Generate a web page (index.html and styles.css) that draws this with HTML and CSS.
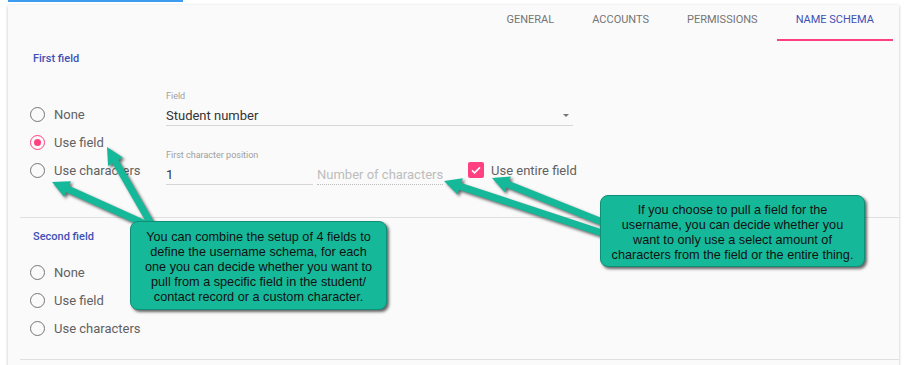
FILE: index.html
```html
<!DOCTYPE html>
<html lang="en">
<head>
  <meta charset="UTF-8" />
  <title>Name Schema</title>
  <link rel="stylesheet" href="styles.css">
</head>
<body>
  <div class="page">
    <div class="topline"></div>

    <div class="card">
      <nav class="tabs">
        <span class="tab">General</span>
        <span class="tab">Accounts</span>
        <span class="tab">Permissions</span>
        <span class="tab active">Name schema</span>
      </nav>

      <section class="block">
        <h2 class="block-title">First field</h2>
        <div class="block-body">
          <div class="radios">
            <label class="radio"><span class="dot"></span>None</label>
            <label class="radio checked"><span class="dot"></span>Use field</label>
            <label class="radio"><span class="dot"></span>Use characters</label>
          </div>
          <div class="fields">
            <div class="input select">
              <span class="input-label">Field</span>
              <span class="input-value">Student number</span>
              <span class="caret"></span>
            </div>
            <div class="field-row">
              <div class="input short">
                <span class="input-label">First character position</span>
                <span class="input-value">1</span>
              </div>
              <div class="input count">
                <span class="input-value placeholder">Number of characters</span>
              </div>
              <label class="check">
                <span class="box">
                  <svg width="12" height="12" viewBox="0 0 12 12"><path d="M2 6.3l2.6 2.5L10 3.4" fill="none" stroke="#fff" stroke-width="1.6"/></svg>
                </span>
                Use entire field
              </label>
            </div>
          </div>
        </div>
      </section>

      <div class="divider"></div>

      <section class="block second">
        <h2 class="block-title">Second field</h2>
        <div class="radios">
          <label class="radio"><span class="dot"></span>None</label>
          <label class="radio"><span class="dot"></span>Use field</label>
          <label class="radio"><span class="dot"></span>Use characters</label>
        </div>
      </section>

      <div class="divider"></div>
    </div>

    <!-- annotation arrows -->
    <svg class="arrows" width="922" height="365" viewBox="0 0 922 365">
      <g fill="#16b89a">
        <polygon transform="translate(107 147) rotate(60.2)" points="0,0 17,-8.5 17,-3.5 88,-3.5 88,3.5 17,3.5 17,8.5" />
        <polygon transform="translate(52 182) rotate(24.3)" points="0,0 17,-8.5 17,-3.5 104,-3.5 104,3.5 17,3.5 17,8.5" />
        <polygon transform="translate(444 181) rotate(18.2)" points="0,0 17,-8.5 17,-3.5 168,-3.5 168,3.5 17,3.5 17,8.5" />
        <polygon transform="translate(492 178) rotate(21.8)" points="0,0 17,-8.5 17,-3.5 120,-3.5 120,3.5 17,3.5 17,8.5" />
      </g>
    </svg>

    <div class="callout left">
      You can combine the setup of 4 fields to<br>
      define the username schema, for each<br>
      one you can decide whether you want to<br>
      pull from a specific field in the student/<br>
      contact record or a custom character.
    </div>
    <div class="callout right">
      If you choose to pull a field for the<br>
      username, you can decide whether you<br>
      want to only use a select amount of<br>
      characters from the field or the entire thing.
    </div>
  </div>
</body>
</html>
```

FILE: styles.css
```css
* {
  box-sizing: border-box;
}
body {
  margin: 0;
  background: #fff;
  font-family: Roboto, 'Liberation Sans', sans-serif;
  color: #616161;
  overflow: hidden;
}
.page {
  position: relative;
  width: 922px;
  height: 365px;
}
.topline {
  width: 175px;
  height: 2px;
  margin-left: 8px;
  background: #3d9cf0;
}

/* Card */
.card {
  margin: 3px 0 0 8px;
  width: 891px;
  height: 400px;
  background: #fafafa;
  box-shadow: 0 1px 3px rgba(0,0,0,0.25);
}

/* Tabs */
.tabs {
  display: flex;
  justify-content: flex-end;
  padding-right: 6px;
  height: 36px;
}
.tab {
  padding: 8px 19px 0;
  height: 36px;
  font-size: 11px;
  line-height: 14px;
  font-weight: 400;
  text-transform: uppercase;
  color: #757575;
  border-bottom: 2px solid transparent;
}
.tab.active {
  color: #3f51b5;
  border-bottom-color: #ff4081;
}

/* Blocks */
.block {
  padding: 11px 0 32px 25px;
}
.block.second {
  padding: 12px 0 17px 25px;
}
.block-title {
  margin: 0;
  font-size: 11px;
  line-height: 14px;
  font-weight: 500;
  color: #3f51b5;
}
.block-body {
  display: flex;
  margin-top: 24px;
}
.divider {
  height: 1px;
  margin-left: 12px;
  background: #e0e0e0;
}

/* Radios */
.radios {
  width: 136px;
  padding-top: 10px;
  margin-left: -3px;
}
.second .radios {
  margin-top: 14px;
  padding-top: 0;
}
.radio {
  display: flex;
  align-items: center;
  gap: 9px;
  height: 28px;
  font-size: 13px;
}
.dot {
  width: 15px;
  height: 15px;
  border: 1.7px solid #757575;
  border-radius: 50%;
  display: flex;
  align-items: center;
  justify-content: center;
}
.radio.checked .dot {
  border-color: #ff4081;
}
.radio.checked .dot::after {
  content: '';
  width: 7px;
  height: 7px;
  border-radius: 50%;
  background: #ff4081;
}

/* Inputs */
.fields {
  display: flex;
  flex-direction: column;
  gap: 23px;
}
.input {
  position: relative;
  display: flex;
  flex-direction: column;
  border-bottom: 1px solid #d6d6d6;
}
.input-label {
  font-size: 9px;
  line-height: 12px;
  color: #9e9e9e;
  margin-bottom: 5px;
}
.input-value {
  font-size: 13px;
  line-height: 18px;
  color: #333;
  white-space: nowrap;
}
.input-value.placeholder {
  color: #bdbdbd;
}
.select {
  width: 407px;
}
.caret {
  position: absolute;
  right: 4px;
  top: 24px;
  border-left: 3.5px solid transparent;
  border-right: 3.5px solid transparent;
  border-top: 3.5px solid #757575;
}
.field-row {
  display: flex;
  align-items: flex-end;
}
.short {
  width: 147px;
}
.count {
  width: 126px;
  margin-left: 4px;
  border-bottom: 1px dotted #bdbdbd;
}
.check {
  display: flex;
  align-items: center;
  gap: 7px;
  margin: 0 0 7px 25px;
  font-size: 13px;
}
.box {
  width: 16px;
  height: 16px;
  border-radius: 2px;
  background: #ff4081;
  display: flex;
  align-items: center;
  justify-content: center;
}

/* Annotations */
.arrows {
  position: absolute;
  left: 0;
  top: 0;
  filter: drop-shadow(2px 2px 1.5px rgba(0,0,0,0.6));
}
.callout {
  position: absolute;
  background: #16b89a;
  border: 1px solid #0f8f77;
  border-radius: 8px;
  box-shadow: 2px 2px 3px rgba(0,0,0,0.6);
  font-family: 'Liberation Sans', Arial, sans-serif;
  font-size: 12.7px;
  line-height: 15px;
  color: #111;
  text-align: center;
  white-space: nowrap;
}
.callout.left {
  left: 130px;
  top: 221px;
  width: 257px;
  height: 89px;
  padding-top: 8px;
}
.callout.right {
  left: 600px;
  top: 195px;
  width: 265px;
  height: 72px;
  padding-top: 7px;
}
```
